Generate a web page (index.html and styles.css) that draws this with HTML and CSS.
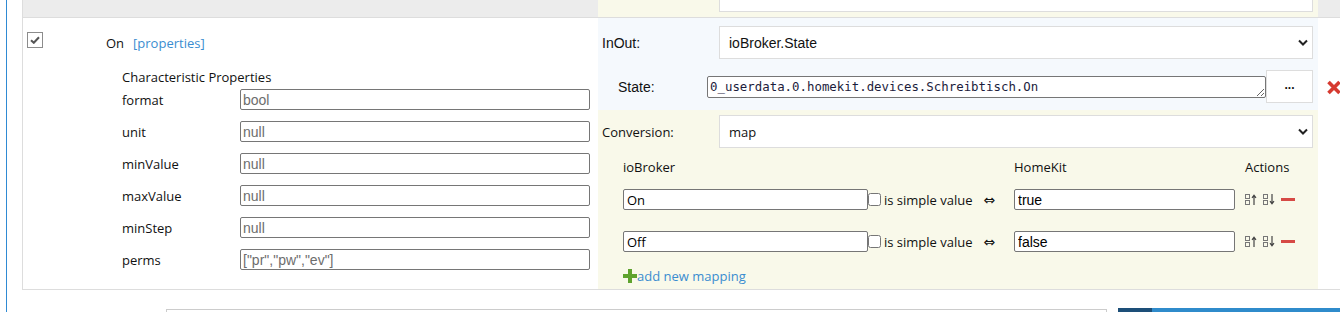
FILE: index.html
```html
<!DOCTYPE html>
<html lang="de">
<head>
    <meta charset="UTF-8">
    <meta name="viewport" content="width=device-width, initial-scale=1.0">
    <title>HomeKit Characteristic</title>
    <link rel="stylesheet" href="styles.css">
</head>
<body>
<div class="page">
    <!-- previous characteristic (cut off) -->
    <div class="row row-prev">
        <div class="cell-left"></div>
        <div class="cell-right"><div class="prev-box"></div></div>
        <div class="cell-extra"></div>
    </div>

    <div class="row row-main">
        <div class="cell-left">
            <div class="char-head">
                <span class="check-box">
                    <svg width="10" height="8" viewBox="0 0 10 8"><path d="M1 4.2 L3.8 6.8 L9 1.2" fill="none" stroke="#555" stroke-width="2"/></svg>
                </span>
                <span class="char-name">On</span>
                <a class="link" href="#">[properties]</a>
            </div>
            <div class="props">
                <div class="props-title">Characteristic Properties</div>
                <div class="prop-list">
                    <div class="prop"><label>format</label><input type="text" value="bool" readonly></div>
                    <div class="prop"><label>unit</label><input type="text" value="null" readonly></div>
                    <div class="prop"><label>minValue</label><input type="text" value="null" readonly></div>
                    <div class="prop"><label>maxValue</label><input type="text" value="null" readonly></div>
                    <div class="prop"><label>minStep</label><input type="text" value="null" readonly></div>
                    <div class="prop"><label>perms</label><input type="text" value='["pr","pw","ev"]' readonly></div>
                </div>
            </div>
        </div>

        <div class="cell-right">
            <div class="inout-part">
                <div class="line">
                    <label class="arial">InOut:</label>
                    <div class="select arial">ioBroker.State
                        <svg width="10" height="7" viewBox="0 0 10 7"><path d="M1 1.5 L5 5.5 L9 1.5" fill="none" stroke="#222" stroke-width="2"/></svg>
                    </div>
                </div>
                <div class="line state-line">
                    <label class="arial">State:</label>
                    <textarea spellcheck="false">0_userdata.0.homekit.devices.Schreibtisch.On</textarea>
                    <button class="dots">...</button>
                </div>
            </div>
            <div class="conv-part">
                <div class="line">
                    <label>Conversion:</label>
                    <div class="select">map
                        <svg width="10" height="7" viewBox="0 0 10 7"><path d="M1 1.5 L5 5.5 L9 1.5" fill="none" stroke="#222" stroke-width="2"/></svg>
                    </div>
                </div>
                <div class="map-table">
                    <div class="map-head"><span>ioBroker</span><span>HomeKit</span><span>Actions</span></div>
                    <div class="map-rows">
                        <div class="map-row">
                            <div class="map-left">
                                <input class="in-io" type="text" value="On">
                                <input class="simple" type="checkbox">
                                <span>is simple value</span>
                                <span class="arrow">&#8660;</span>
                            </div>
                            <input class="in-hk" type="text" value="true">
                            <div class="actions">
                                <svg width="12" height="11" viewBox="0 0 12 11"><rect x="0.5" y="0.5" width="4" height="4" fill="none" stroke="#777"/><rect x="0.5" y="6.5" width="4" height="4" fill="none" stroke="#777"/><path d="M9 11 V1.5 M7 3.8 L9 1.3 L11 3.8" fill="none" stroke="#444" stroke-width="1.2"/></svg>
                                <svg width="12" height="11" viewBox="0 0 12 11"><rect x="0.5" y="0.5" width="4" height="4" fill="none" stroke="#777"/><rect x="0.5" y="6.5" width="4" height="4" fill="none" stroke="#777"/><path d="M9 0 V9.5 M7 7.2 L9 9.7 L11 7.2" fill="none" stroke="#444" stroke-width="1.2"/></svg>
                                <span class="minus"></span>
                            </div>
                        </div>
                        <div class="map-row">
                            <div class="map-left">
                                <input class="in-io" type="text" value="Off">
                                <input class="simple" type="checkbox">
                                <span>is simple value</span>
                                <span class="arrow">&#8660;</span>
                            </div>
                            <input class="in-hk" type="text" value="false">
                            <div class="actions">
                                <svg width="12" height="11" viewBox="0 0 12 11"><rect x="0.5" y="0.5" width="4" height="4" fill="none" stroke="#777"/><rect x="0.5" y="6.5" width="4" height="4" fill="none" stroke="#777"/><path d="M9 11 V1.5 M7 3.8 L9 1.3 L11 3.8" fill="none" stroke="#444" stroke-width="1.2"/></svg>
                                <svg width="12" height="11" viewBox="0 0 12 11"><rect x="0.5" y="0.5" width="4" height="4" fill="none" stroke="#777"/><rect x="0.5" y="6.5" width="4" height="4" fill="none" stroke="#777"/><path d="M9 0 V9.5 M7 7.2 L9 9.7 L11 7.2" fill="none" stroke="#444" stroke-width="1.2"/></svg>
                                <span class="minus"></span>
                            </div>
                        </div>
                    </div>
                </div>
                <a class="add-map" href="#">
                    <svg width="14" height="14" viewBox="0 0 14 14"><path d="M7 0 V14 M0 7 H14" stroke="#5fa32e" stroke-width="4"/></svg>add new mapping
                </a>
            </div>
        </div>

        <div class="cell-extra">
            <svg width="16" height="15" viewBox="0 0 16 15"><path d="M2.5 2 L13.5 13 M13.5 2 L2.5 13" stroke="#d63a30" stroke-width="3.6"/></svg>
        </div>
    </div>

    <div class="bottom">
        <div class="bottom-box"></div>
        <div class="bottom-bar"></div>
    </div>
</div>
</body>
</html>
```

FILE: styles.css
```css
* {
    box-sizing: border-box;
}
body {
    margin: 0;
    font-family: "Open Sans", "Noto Sans", Arial, sans-serif;
    font-size: 13px;
    color: #111;
    background: #fff;
    overflow: hidden;
}
.page {
    margin-left: 6px;
    border-left: 1px solid #2f8ad3;
    padding-left: 15px;
    height: 312px;
}
.arial {
    font-family: "Liberation Sans", Arial, sans-serif;
    font-size: 14px;
}

/* table rows */
.row {
    display: grid;
    grid-template-columns: 575px 720px 22px;
    border-left: 1px solid #ddd;
    border-bottom: 1px solid #ddd;
}
.row-prev {
    height: 18px;
    background: #ececec;
}
.row-prev .cell-right {
    background: #f9f9ea;
    padding-left: 121px;
}
.prev-box {
    width: 594px;
    height: 12px;
    background: #fff;
    border: 1px solid #ddd;
    border-top: none;
}
.row-main {
    height: 272px;
}

/* left cell */
.row-main .cell-left {
    padding: 14px 0 0 4px;
}
.char-head {
    display: flex;
    align-items: flex-start;
    height: 19px;
}
.check-box {
    width: 16px;
    height: 16px;
    border: 1px solid #8c8c8c;
    display: flex;
    align-items: center;
    justify-content: center;
}
.char-name {
    margin: 3px 0 0 63px;
    line-height: 16px;
}
.link {
    margin: 3px 0 0 9px;
    line-height: 16px;
    color: #3a8dd0;
    text-decoration: none;
}
.props {
    padding-left: 95px;
}
.props-title {
    margin-top: 18px;
    line-height: 16px;
}
.prop-list {
    display: flex;
    flex-direction: column;
    gap: 11px;
    margin-top: 4px;
}
.prop {
    display: flex;
    align-items: center;
    height: 21px;
}
.prop label {
    width: 118px;
}
.prop input {
    width: 350px;
    height: 21px;
    border: 1px solid #767676;
    border-radius: 2px;
    padding: 0 2px;
    font: 14px "Liberation Sans", Arial, sans-serif;
    color: #6d6d6d;
    outline: none;
}

/* right cell */
.row-main .cell-right {
    display: flex;
    flex-direction: column;
}
.inout-part {
    background: #f5f9fd;
    padding: 8px 5px 7px 4px;
}
.line {
    display: flex;
    align-items: center;
}
.line label {
    width: 117px;
    flex: none;
}
.select {
    width: 594px;
    height: 33px;
    border: 1px solid #ddd;
    background: #fff;
    display: flex;
    align-items: center;
    justify-content: space-between;
    padding: 0 4px 0 9px;
}
.state-line {
    margin-top: 11px;
    padding-left: 16px;
}
.state-line label {
    width: 89px;
}
.state-line textarea {
    width: 559px;
    height: 22px;
    border: 1px solid #767676;
    border-radius: 2px;
    padding: 1px 2px;
    font: 12.4px "DejaVu Sans Mono", "Liberation Mono", monospace;
    line-height: 18px;
    color: #1c1c3c;
    overflow: hidden;
    outline: none;
}
.dots {
    width: 47px;
    height: 33px;
    border: 1px solid #ddd;
    background: #fff;
    font: bold 12px "Liberation Sans", Arial, sans-serif;
    color: #111;
    padding: 0 0 4px;
}
.conv-part {
    flex: 1;
    background: #f9f9ea;
    padding: 5px 5px 0 4px;
}
.map-table {
    margin: 11px 0 0 21px;
}
.map-head,
.map-row {
    display: grid;
    grid-template-columns: 391px 231px auto;
}
.map-head {
    line-height: 16px;
}
.map-rows {
    display: flex;
    flex-direction: column;
    gap: 21px;
    margin-top: 14px;
}
.map-row {
    height: 21px;
    align-items: center;
}
.map-left {
    display: flex;
    align-items: center;
}
.map-row input[type=text] {
    height: 21px;
    border: 1px solid #767676;
    border-radius: 2px;
    padding: 0 3px;
    color: #000;
    outline: none;
}
.in-io {
    width: 245px;
    font: 13px "Open Sans", "Noto Sans", sans-serif;
}
.in-hk {
    width: 221px;
    font: 14px "Liberation Sans", Arial, sans-serif;
}
.simple {
    width: 13px;
    height: 13px;
    margin: 0 3px 0 0;
}
.arrow {
    margin-left: 11px;
    font-family: "DejaVu Sans", sans-serif;
    font-size: 14px;
    line-height: 16px;
}
.actions {
    display: flex;
    align-items: center;
    gap: 6px;
}
.minus {
    width: 14px;
    height: 3px;
    background: #d64a45;
}
.add-map {
    display: flex;
    align-items: center;
    margin: 15px 0 0 21px;
    line-height: 18px;
    color: #3a8dd0;
    text-decoration: none;
}

/* delete button outside the row */
.row-main .cell-extra {
    padding: 62px 0 0 8px;
}

/* next row, cut off */
.bottom {
    display: flex;
    align-items: flex-start;
    padding: 18px 0 0 144px;
}
.bottom-box {
    width: 941px;
    height: 10px;
    margin-top: 1px;
    border: 1px solid #ccc;
    border-bottom: none;
}
.bottom-bar {
    width: 222px;
    height: 10px;
    margin-left: 11px;
    background: linear-gradient(to right, #1d4f78 34px, #2f8bcb 34px);
}
```
